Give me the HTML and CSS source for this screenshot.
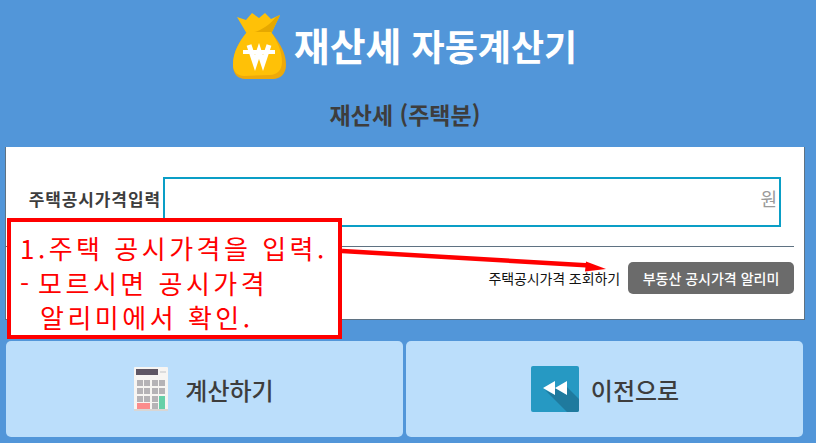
FILE: index.html
```html
<!DOCTYPE html>
<html lang="ko">
<head>
  <meta charset="UTF-8">
  <title>재산세 자동계산기</title>
  <link rel="stylesheet" href="styles.css">
</head>
<body>
  <header class="top">
    <svg class="bag" viewBox="0 0 53 68" width="53" height="68">
      <path d="M4 5 L13 8 L19 1 L26 6 L32 1 L38 7 L47 3 L38 22 L14 22 Z" fill="#ffc107"/>
      <path d="M14 22 C26 20 36 14 43 5 L47 3 L38 22 Z" fill="#e6a800"/>
      <path d="M14 20 L38 20 C46 30 53 40 53 53 C53 62 47 67 40 67 L12 67 C5 67 0 62 0 53 C0 40 6 30 14 20 Z" fill="#eda90a"/>
      <path d="M14 20 L38 20 C45 30 49 40 49 50 C49 58 44 63 37 63 L11 64 C5 64 0 60 0 53 C0 40 6 30 14 20 Z" fill="#ffc107"/>
      <path d="M16 33 L22 51 L26 39 L30 51 L36 33" fill="none" stroke="#fff" stroke-width="5"/>
      <path d="M10 40 H42" fill="none" stroke="#fff" stroke-width="4"/>
    </svg>
    <h1 class="title"><span class="title-big">재산세</span> 자동계산기</h1>
  </header>
  <h2 class="sub">재산세 (주택분)</h2>

  <section class="card">
    <div class="price-row">
      <label class="price-label" for="price">주택공시가격입력</label>
      <div class="price-input">
        <input type="text" id="price">
        <span class="unit">원</span>
      </div>
    </div>
    <hr class="line">
    <div class="lookup-row">
      <span class="lookup-text">주택공시가격 조회하기</span>
      <button class="lookup-btn" type="button">부동산 공시가격 알리미</button>
    </div>
  </section>

  <div class="actions">
    <button class="action" type="button">
      <svg viewBox="0 0 34 44" width="34" height="44">
        <rect width="34" height="44" rx="1" fill="#f7f5f2"/>
        <rect y="42" width="34" height="2" fill="#d9d6d4"/>
        <rect x="2" y="2" width="22" height="6" fill="#5e5664"/>
        <rect x="26" y="4" width="6" height="2" fill="#dcdcdc"/>
        <g fill="#b5b3b6">
          <rect x="3" y="13" width="6" height="6"/><rect x="10" y="13" width="6" height="6"/><rect x="18" y="13" width="6" height="6"/><rect x="25" y="13" width="6" height="6"/>
          <rect x="3" y="21" width="6" height="6"/><rect x="10" y="21" width="6" height="6"/><rect x="18" y="21" width="6" height="6"/><rect x="25" y="21" width="6" height="6"/>
          <rect x="3" y="29" width="6" height="6"/><rect x="10" y="29" width="6" height="6"/><rect x="18" y="29" width="6" height="6"/>
          <rect x="18" y="36" width="6" height="6"/>
        </g>
        <rect x="25" y="29" width="6" height="13" fill="#66d0a8"/>
        <rect x="3" y="36" width="13" height="6" fill="#fb8c8c"/>
      </svg>
      <span>계산하기</span>
    </button>
    <button class="action action-back" type="button">
      <svg viewBox="0 0 48 46" width="48" height="46">
        <rect width="48" height="46" rx="2" fill="#2699c3"/>
        <path d="M14 24 L36 46 H46 Q48 46 48 44 V33 L36 21 V29 L24 22 V29 Z" fill="#1f7a9e"/>
        <path d="M12 22 L24 15 V29 Z M24 22 L36 15 V29 Z" fill="#fff"/>
      </svg>
      <span>이전으로</span>
    </button>
  </div>

  <div class="note">
    <p>1.주택 공시가격을 입력.</p>
    <p><span class="note-dash">-</span>모르시면 공시가격</p>
    <p class="note-indent">알리미에서 확인.</p>
  </div>
  <svg class="arrow" viewBox="0 0 816 443" width="816" height="443">
    <path d="M342 251 L590 265.5" stroke="#f00" stroke-width="4.5" fill="none"/>
    <path d="M586 261.5 L606 269 L585 271.5 Z" fill="#f00"/>
  </svg>
</body>
</html>
```

FILE: styles.css
```css
* {
  box-sizing: border-box;
}

html, body {
  height: 100%;
}

body {
  margin: 0;
  padding: 12px 11px 0 5px;
  background: #5296d9;
  font-family: "Noto Sans CJK KR", "Noto Sans", sans-serif;
  color: #3d3d3d;
  overflow: hidden;
  position: relative;
}

.top {
  display: flex;
  justify-content: center;
  align-items: center;
  gap: 8px;
  height: 68px;
}

.title {
  margin: 0 0 4px;
  font-size: 36px;
  font-weight: 700;
  line-height: 1;
  color: #fff;
}

.title-big {
  font-size: 39px;
}

.sub {
  margin: 19px 0 0;
  height: 48px;
  text-align: center;
  font-size: 23px;
  line-height: 30px;
  font-weight: 700;
}

.card {
  background: #fff;
  height: 173px;
  padding: 30px 10px 0 0;
  border: 1px solid #5f7282;
  border-top: 0;
}

.price-row {
  display: flex;
  align-items: center;
  padding-right: 13px;
}

.price-label {
  width: 157px;
  padding: 0 2px 8px 0;
  text-align: right;
  font-size: 17px;
  font-weight: 700;
  letter-spacing: 0.9px;
  white-space: nowrap;
}

.price-input {
  flex: 1;
  height: 50px;
  border: 2px solid #0a9ec6;
  display: flex;
  align-items: center;
  padding: 0 2px 8px 0;
}

.price-input input {
  flex: 1;
  border: 0;
  outline: 0;
  background: none;
}

.unit {
  font-size: 18px;
  color: #9a9a9a;
}

.line {
  margin: 19px 0 0;
  border: 0;
  border-top: 1px solid #5f7282;
}

.lookup-row {
  display: flex;
  justify-content: flex-end;
  align-items: center;
  gap: 8px;
  margin-top: 15px;
}

.lookup-text {
  font-size: 14px;
  letter-spacing: -0.1px;
  color: #111;
}

.lookup-btn {
  width: 166px;
  height: 32px;
  border: 0;
  border-radius: 5px;
  background: #6b6b6b;
  color: #fff;
  font-family: inherit;
  font-size: 14px;
  font-weight: 500;
}

.actions {
  display: grid;
  grid-template-columns: 1fr 1fr;
  gap: 3px;
  margin: 21px 2px 0 1px;
}

.action {
  height: 96px;
  border: 0;
  border-radius: 5px;
  background: #bbdefb;
  display: flex;
  justify-content: center;
  align-items: center;
  gap: 17px;
  padding: 0 1px 0 0;
  font-family: inherit;
  font-size: 24px;
  font-weight: 500;
  color: #3d3d3d;
}

.action-back {
  gap: 12px;
  padding: 0 0 0 1px;
}

.note {
  position: absolute;
  left: 7px;
  top: 218px;
  width: 335px;
  height: 121px;
  padding: 9px 0 0 9px;
  background: #fff;
  border: 4px solid #f00;
  color: #f00;
  font-size: 26px;
  line-height: 34.5px;
  letter-spacing: 3.5px;
  white-space: nowrap;
}

.note p {
  margin: 0;
}

.note-dash {
  letter-spacing: 9px;
}

.note-indent {
  padding-left: 20px;
}

.arrow {
  position: absolute;
  left: 0;
  top: 0;
  pointer-events: none;
}

.bag {
  flex: none;
}
```
